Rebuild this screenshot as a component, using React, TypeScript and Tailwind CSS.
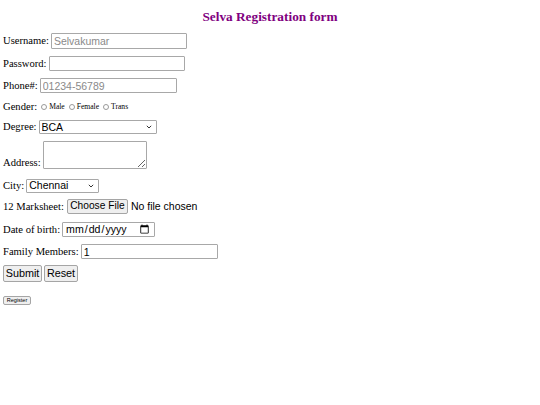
import React from "react";

const inputCls =
  "ml-[2px] h-[15px] border border-[#a8a8a8] rounded-[1px] px-[2px] bg-white font-['Liberation_Sans',sans-serif] text-[10.5px] leading-none text-black placeholder:text-[#8a8a8a] outline-none";

const btnCls =
  "bg-[#efefef] border border-[#a5a5a5] rounded-[2px] font-['Liberation_Sans',sans-serif] text-black leading-none";

function Chevron() {
  return (
    <svg
      className="pointer-events-none absolute right-[5px] top-1/2 -translate-y-1/2"
      width="6"
      height="4"
      viewBox="0 0 6 4"
    >
      <path d="M0.8 0.8 L3 3 L5.2 0.8" fill="none" stroke="#333" strokeWidth="1" />
    </svg>
  );
}

function Select({ width, value, options }: { width: string; value: string; options: string[] }) {
  return (
    <span className="relative ml-[2px] inline-flex">
      <select
        defaultValue={value}
        className={`${width} h-[14px] appearance-none border border-[#a8a8a8] rounded-[1px] pl-[2px] bg-white font-['Liberation_Sans',sans-serif] text-[10.5px] leading-none text-black outline-none`}
      >
        {options.map((o) => (
          <option key={o}>{o}</option>
        ))}
      </select>
      <Chevron />
    </span>
  );
}

function Radio({ label }: { label: string }) {
  return (
    <label className="ml-[4px] inline-flex items-center">
      <input
        type="radio"
        name="gender"
        className="appearance-none w-[6px] h-[6px] rounded-full border border-[#9a9a9a] bg-white"
      />
      <span className="ml-[2px] text-[7.6px]">{label}</span>
    </label>
  );
}

export default function App() {
  return (
    <div className="w-[540px] h-[405px] bg-white px-[3px] font-['Liberation_Serif',serif] text-[10.6px] text-black">
      <h1 className="pt-[9px] leading-[16px] text-center text-[13.3px] font-bold text-[#800080]">
        Selva Registration form
      </h1>

      <form className="flex flex-col" onSubmit={(e) => e.preventDefault()}>
        <div className="mt-[8px] h-[16px] flex items-center">
          <span>Username:</span>
          <input className={`${inputCls} w-[136px] h-[16px]`} placeholder="Selvakumar" />
        </div>

        <div className="mt-[7px] h-[15px] flex items-center">
          <span>Password:</span>
          <input type="password" className={`${inputCls} w-[136px]`} />
        </div>

        <div className="mt-[7px] h-[15px] flex items-center">
          <span>Phone#:</span>
          <input className={`${inputCls} w-[137px]`} placeholder="01234-56789" />
        </div>

        <div className="mt-[8px] h-[12px] flex items-center">
          <span>Gender:</span>
          <Radio label="Male" />
          <Radio label="Female" />
          <Radio label="Trans" />
        </div>

        <div className="mt-[7px] h-[14px] flex items-center">
          <span>Degree:</span>
          <Select width="w-[118px]" value="BCA" options={["BCA", "BSc", "BCom", "BA"]} />
        </div>

        <div className="mt-[7px] h-[28px] flex items-end">
          <span className="leading-[12px]">Address:</span>
          <textarea className="ml-[2px] w-[104px] h-[28px] border border-[#a8a8a8] rounded-[1px] bg-white resize" />
        </div>

        <div className="mt-[10px] h-[13px] flex items-center">
          <span>City:</span>
          <Select width="w-[73px] h-[13px]" value="Chennai" options={["Chennai", "Madurai", "Coimbatore"]} />
        </div>

        <div className="mt-[7px] h-[15px] flex items-center">
          <span>12 Marksheet:</span>
          <button type="button" className={`${btnCls} ml-[3px] h-[15px] w-[61px] text-[10.2px]`}>
            Choose File
          </button>
          <span className="ml-[3px] font-['Liberation_Sans',sans-serif] text-[10.5px]">No file chosen</span>
        </div>

        <div className="mt-[8px] h-[15px] flex items-center">
          <span>Date of birth:</span>
          <input
            type="date"
            className={`${inputCls} w-[93px] font-['DejaVu_Sans_Mono',monospace] text-[10.6px]`}
          />
        </div>

        <div className="mt-[7px] h-[15px] flex items-center">
          <span>Family Members:</span>
          <input className={`${inputCls} w-[137px]`} defaultValue="1" />
        </div>

        <div className="mt-[6px] h-[17px] flex items-center gap-[2px]">
          <button type="submit" className={`${btnCls} h-[17px] w-[39px] text-[10.8px]`}>
            Submit
          </button>
          <button type="reset" className={`${btnCls} h-[17px] w-[34px] text-[10.8px]`}>
            Reset
          </button>
        </div>

        <div className="mt-[14px] h-[9px] flex items-center">
          <button type="button" className={`${btnCls} h-[9px] w-[28px] text-[5.5px]`}>
            Register
          </button>
        </div>
      </form>
    </div>
  );
}
